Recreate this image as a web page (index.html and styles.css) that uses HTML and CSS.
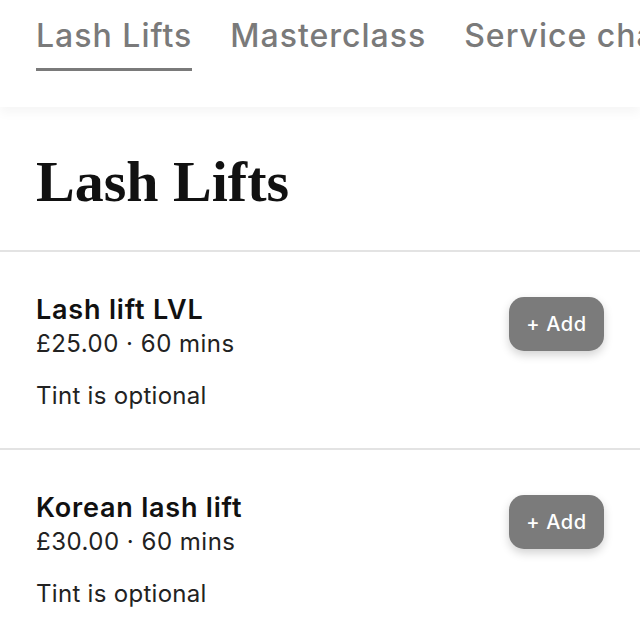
FILE: index.html
```html
<!DOCTYPE html>
<html>
<head>
<meta charset="utf-8">
<link rel="stylesheet" href="styles.css">
</head>
<body>
<nav class="tabs">
  <div class="tab active">Lash Lifts</div>
  <div class="tab">Masterclass</div>
  <div class="tab">Service charge</div>
</nav>
<main>
  <h1 class="title">Lash Lifts</h1>
  <div class="item">
    <div class="info">
      <div class="name">Lash lift LVL</div>
      <div class="meta">£25.00 · 60 mins</div>
      <div class="desc">Tint is optional</div>
    </div>
    <button class="add">+ Add</button>
  </div>
  <div class="item">
    <div class="info">
      <div class="name">Korean lash lift</div>
      <div class="meta">£30.00 · 60 mins</div>
      <div class="desc">Tint is optional</div>
    </div>
    <button class="add">+ Add</button>
  </div>
</main>
</body>
</html>
```
FILE: styles.css
```css
html, body {
  margin: 0;
  padding: 0;
  background: #fff;
  overflow: hidden;
  width: 640px;
  height: 640px;
}
body {
  font-family: "Inter", "Liberation Sans", sans-serif;
  color: #111;
}
.tabs {
  display: flex;
  gap: 38px;
  padding: 16px 0 0 36px;
  height: 91px;
  white-space: nowrap;
  overflow: hidden;
  box-shadow: 0 6px 10px rgba(0,0,0,0.04);
  position: relative;
  z-index: 1;
}
.tab {
  font-size: 32px;
  font-weight: 500;
  color: #7a7a7a;
  line-height: 40px;
  height: 55px;
  box-sizing: border-box;
  letter-spacing: 1px;
  flex-shrink: 0;
}
.tab.active {
  border-bottom: 3px solid #7a7a7a;
}
.title {
  font-family: "Liberation Serif", "DejaVu Serif", serif;
  font-weight: 700;
  font-size: 58px;
  line-height: 60px;
  margin: 0;
  padding: 45px 36px 38px;
  color: #111;
  border-bottom: 2px solid #e3e3e3;
}
.item {
  display: flex;
  justify-content: space-between;
  align-items: flex-start;
  padding: 42px 36px 0 36px;
  height: 198px;
  box-sizing: border-box;
  border-bottom: 2px solid #e3e3e3;
}
.name {
  font-size: 27px;
  font-weight: 600;
  line-height: 32px;
  letter-spacing: 0.8px;
  color: #111;
}
.meta {
  font-size: 24px;
  line-height: 32px;
  margin-top: 2px;
  letter-spacing: 0.5px;
  color: #222;
}
.desc {
  font-size: 24px;
  line-height: 32px;
  margin-top: 20px;
  letter-spacing: 0.3px;
  color: #222;
}
.add {
  font-family: inherit;
  margin-top: 3px;
  width: 95px;
  height: 54px;
  border: none;
  border-radius: 15px;
  background: #7b7b7b;
  color: #fff;
  font-size: 20px;
  font-weight: 500;
  letter-spacing: 0.6px;
  box-shadow: 0 4px 10px rgba(0,0,0,0.18);
}
```
